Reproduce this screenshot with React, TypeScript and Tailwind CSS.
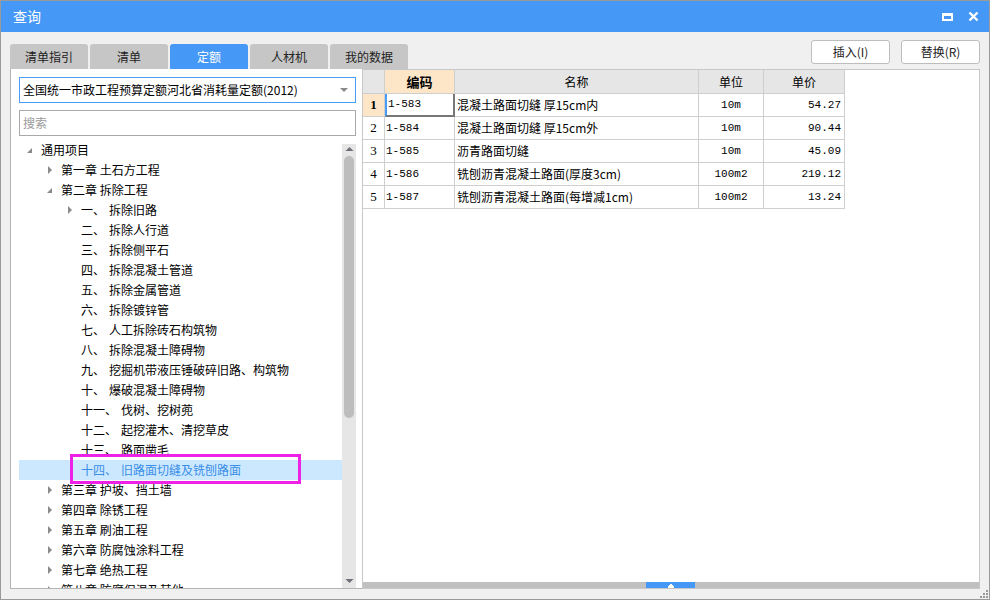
import React from "react";

type Node = { label: string; sub?: string; level: number; state?: "open" | "closed"; selected?: boolean };

const tree: Node[] = [
  { label: "通用项目", level: 0, state: "open" },
  { label: "第一章 土石方工程", level: 1, state: "closed" },
  { label: "第二章 拆除工程", level: 1, state: "open" },
  { label: "一、", sub: "拆除旧路", level: 2, state: "closed" },
  { label: "二、", sub: "拆除人行道", level: 2 },
  { label: "三、", sub: "拆除侧平石", level: 2 },
  { label: "四、", sub: "拆除混凝土管道", level: 2 },
  { label: "五、", sub: "拆除金属管道", level: 2 },
  { label: "六、", sub: "拆除镀锌管", level: 2 },
  { label: "七、", sub: "人工拆除砖石构筑物", level: 2 },
  { label: "八、", sub: "拆除混凝土障碍物", level: 2 },
  { label: "九、", sub: "挖掘机带液压锤破碎旧路、构筑物", level: 2 },
  { label: "十、", sub: "爆破混凝土障碍物", level: 2 },
  { label: "十一、", sub: "伐树、挖树蔸", level: 2 },
  { label: "十二、", sub: "起挖灌木、清挖草皮", level: 2 },
  { label: "十三、", sub: "路面凿毛", level: 2 },
  { label: "十四、", sub: "旧路面切缝及铣刨路面", level: 2, selected: true },
  { label: "第三章 护坡、挡土墙", level: 1, state: "closed" },
  { label: "第四章 除锈工程", level: 1, state: "closed" },
  { label: "第五章 刷油工程", level: 1, state: "closed" },
  { label: "第六章 防腐蚀涂料工程", level: 1, state: "closed" },
  { label: "第七章 绝热工程", level: 1, state: "closed" },
  { label: "第八章 防腐保温及其他", level: 1, state: "closed" },
];

const rows = [
  { code: "1-583", name: "混凝土路面切缝 厚15cm内", unit: "10m", price: "54.27" },
  { code: "1-584", name: "混凝土路面切缝 厚15cm外", unit: "10m", price: "90.44" },
  { code: "1-585", name: "沥青路面切缝", unit: "10m", price: "45.09" },
  { code: "1-586", name: "铣刨沥青混凝土路面(厚度3cm)", unit: "100m2", price: "219.12" },
  { code: "1-587", name: "铣刨沥青混凝土路面(每增减1cm)", unit: "100m2", price: "13.24" },
];

const tabs = ["清单指引", "清单", "定额", "人材机", "我的数据"];

const ui = "font-['Microsoft_YaHei','Noto_Sans_CJK_SC',sans-serif]";
const mono = "font-['Liberation_Mono','Noto_Sans_CJK_SC',monospace]";

function Arrow({ state }: { state?: "open" | "closed" }) {
  if (state === "closed")
    return (
      <svg width="8" height="10" viewBox="0 0 8 10" className="shrink-0">
        <path d="M2 1 L6 5 L2 9 Z" fill="#8a8a8a" />
      </svg>
    );
  if (state === "open")
    return (
      <svg width="8" height="10" viewBox="0 0 8 10" className="shrink-0">
        <path d="M6 3 L6 8 L1 8 Z" fill="#8a8a8a" />
      </svg>
    );
  return <span className="w-[8px] shrink-0" />;
}

export default function App() {
  return (
    <div className={`flex h-[600px] w-[990px] flex-col overflow-hidden border border-[#9a9a9a] bg-[#f0f0f0] ${ui}`}>
      {/* title bar */}
      <div className="flex h-[31px] shrink-0 items-center justify-between bg-[#4698f6] pl-[12px] pr-[10px]">
        <span className="text-[14px] text-white">查询</span>
        <div className="flex items-center gap-[15px]">
          <span className="block h-[8px] w-[11px] border-2 border-t-[3px] border-white" />
          <svg width="11" height="11" viewBox="0 0 11 11">
            <path d="M1.5 1.5 L9.5 9.5 M9.5 1.5 L1.5 9.5" stroke="white" strokeWidth="2.4" />
          </svg>
        </div>
      </div>

      <div className="flex flex-1 flex-col px-[9px]">
        {/* tabs + buttons */}
        <div className="flex h-[37px] shrink-0 items-end justify-between">
          <div className="flex gap-[2px]">
            {tabs.map((t, i) => (
              <div
                key={t}
                className={`flex h-[25px] w-[78px] items-center justify-center rounded-t-[3px] text-[12px] ${
                  i === 2 ? "bg-[#4698f6] text-white" : "bg-[#c6c6c6] text-[#222]"
                }`}
              >
                {t}
              </div>
            ))}
          </div>
          <div className="mb-[5px] flex gap-[11px]">
            {["插入(I)", "替换(R)"].map((b) => (
              <button
                key={b}
                className="flex h-[24px] w-[79px] items-center justify-center rounded-[3px] border border-[#bdbdbd] bg-white text-[12px] text-[#222]"
              >
                {b}
              </button>
            ))}
          </div>
        </div>

        {/* content */}
        <div className="flex h-[520px] shrink-0">
          {/* left panel */}
          <div className="flex w-[352px] flex-col border-b border-l border-[#b4b4b4] bg-white pl-[8px] pr-[6px] pt-[8px]">
            <div className="flex h-[26px] items-center justify-between border border-[#4a9cf5] pl-[3px] pr-[7px] text-[12px] text-black">
              <span>全国统一市政工程预算定额河北省消耗量定额(2012)</span>
              <svg width="8" height="5" viewBox="0 0 8 5">
                <path d="M0 0 H8 L4 4 Z" fill="#8a8a8a" />
              </svg>
            </div>
            <div className="mt-[7px] flex h-[26px] items-center border border-[#a9a9a9] px-[3px] text-[12px] text-[#9a9a9a]">
              搜索
            </div>
            <div className="relative mt-[4px] flex flex-1 overflow-hidden">
              <div className="flex-1 overflow-hidden">
                {tree.map((n, i) => (
                  <div
                    key={i}
                    className={`flex h-[20px] items-center text-[12px] ${
                      n.selected ? "bg-[#cce8ff] text-[#3a8ee6]" : "text-black"
                    }`}
                    style={{ paddingLeft: 7 + n.level * 20 }}
                  >
                    <Arrow state={n.state} />
                    <span className="ml-[7px] whitespace-nowrap">{n.label}</span>
                    {n.sub && <span className="ml-[4px] whitespace-nowrap">{n.sub}</span>}
                  </div>
                ))}
              </div>
              {/* vertical scrollbar */}
              <div className="mt-[4px] flex w-[14px] shrink-0 flex-col items-center bg-[#e6e6e6]">
                <svg width="9" height="8" viewBox="0 0 9 8" className="mt-[2px] shrink-0">
                  <path d="M0.5 5 L4.5 1 L8.5 5 Z" fill="#6f6f78" />
                </svg>
                <div className="mt-[2px] h-[262px] w-[10px] rounded-[5px] bg-[#bdbdbd]" />
                <div className="flex-1" />
                <svg width="9" height="8" viewBox="0 0 9 8" className="mb-[3px] shrink-0">
                  <path d="M0.5 2 L4.5 6 L8.5 2 Z" fill="#6f6f78" />
                </svg>
              </div>
              {/* highlight annotation */}
              <div className="pointer-events-none absolute left-[51px] top-[314px] h-[30px] w-[231px] border-[3px] border-[#ee22e6]" />
            </div>
          </div>

          {/* right panel */}
          <div className="flex flex-1 flex-col border border-[#c8c8c8] bg-white">
            <div className="w-[482px] text-[12px] text-black">
              <div className="flex h-[24px] bg-[#e6e6e6]">
                <div className="w-[22px] border-b border-r border-[#cfcfcf]" />
                <div className="flex w-[70px] items-center justify-center border-b border-r border-[#cfcfcf] bg-[#fde6c8] text-[13px] font-bold">编码</div>
                <div className="flex w-[244px] items-center justify-center border-b border-r border-[#cfcfcf]">名称</div>
                <div className="flex w-[65px] items-center justify-center border-b border-r border-[#cfcfcf]">单位</div>
                <div className="flex w-[81px] items-center justify-center border-b border-r border-[#cfcfcf]">单价</div>
              </div>
              {rows.map((r, i) => (
                <div key={r.code} className="flex h-[23px]">
                  <div
                    className={`flex w-[22px] items-center justify-center border-b border-r border-[#cfcfcf] font-['Liberation_Serif',serif] text-[13px] ${
                      i === 0 ? "bg-[#fde6c8] font-bold" : ""
                    }`}
                  >
                    {i + 1}
                  </div>
                  <div
                    className={`flex w-[70px] items-center pl-[1px] ${mono} text-[11px] ${
                      i === 0
                        ? "border-b-2 border-l-2 border-r-2 border-b-[#777] border-l-[#4a9cf5] border-r-[#777]"
                        : "border-b border-r border-[#cfcfcf]"
                    }`}
                  >
                    {r.code}
                  </div>
                  <div className={`flex w-[244px] items-center border-b border-r border-[#cfcfcf] pl-[2px] text-[12px] ${ui}`}>
                    {r.name}
                  </div>
                  <div className={`flex w-[65px] items-center justify-center border-b border-r border-[#cfcfcf] ${mono} text-[11px]`}>
                    {r.unit}
                  </div>
                  <div className={`flex w-[81px] items-center justify-end border-b border-r border-[#cfcfcf] pr-[3px] ${mono} text-[11px]`}>
                    {r.price}
                  </div>
                </div>
              ))}
            </div>
            <div className="flex-1" />
            {/* horizontal scrollbar */}
            <div className="flex h-[6px] bg-[#c0c0c0]">
              <div className="ml-[283px] flex w-[49px] items-end justify-center bg-[#4698f6]">
                <svg width="6" height="4" viewBox="0 0 6 4">
                  <path d="M2 0 H4 V1 H5 V2 H6 V4 H0 V2 H1 V1 H2 Z" fill="white" />
                </svg>
              </div>
            </div>
          </div>
        </div>

        {/* bottom with grip */}
        <div className="flex flex-1 items-end justify-end pb-[1px]">
          <svg width="8" height="8" viewBox="0 0 8 8" className="-mr-[8px]">
            <g fill="#9a9a9a">
              <rect x="6" y="0" width="2" height="2" />
              <rect x="3" y="3" width="2" height="2" />
              <rect x="6" y="3" width="2" height="2" />
              <rect x="0" y="6" width="2" height="2" />
              <rect x="3" y="6" width="2" height="2" />
              <rect x="6" y="6" width="2" height="2" />
            </g>
          </svg>
        </div>
      </div>
    </div>
  );
}
